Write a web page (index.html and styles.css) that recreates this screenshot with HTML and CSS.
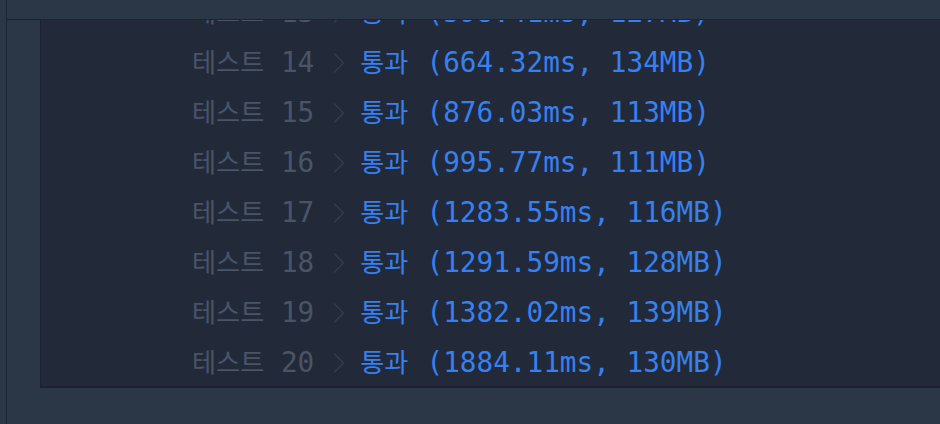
FILE: index.html
```html
<!DOCTYPE html>
<html lang="ko">
<head>
    <meta charset="UTF-8">
    <meta name="viewport" content="width=device-width, initial-scale=1.0">
    <title>채점 결과</title>
    <link rel="stylesheet" href="styles.css">
</head>
<body>
    <div class="app">
        <div class="rail"></div>
        <div class="main">
            <div class="topbar"></div>
            <div class="content">
                <div class="console">
                    <ul class="results">
                        <li class="result"><span class="ko label">테스트</span> <span class="num">13</span> <svg class="chev" viewBox="0 0 16.5 28"><path d="M3 4.5 L12.5 14 L3 23.5"/></svg> <span class="ko pass">통과</span> <span class="stat">(598.41ms, 127MB)</span></li>
                        <li class="result"><span class="ko label">테스트</span> <span class="num">14</span> <svg class="chev" viewBox="0 0 16.5 28"><path d="M3 4.5 L12.5 14 L3 23.5"/></svg> <span class="ko pass">통과</span> <span class="stat">(664.32ms, 134MB)</span></li>
                        <li class="result"><span class="ko label">테스트</span> <span class="num">15</span> <svg class="chev" viewBox="0 0 16.5 28"><path d="M3 4.5 L12.5 14 L3 23.5"/></svg> <span class="ko pass">통과</span> <span class="stat">(876.03ms, 113MB)</span></li>
                        <li class="result"><span class="ko label">테스트</span> <span class="num">16</span> <svg class="chev" viewBox="0 0 16.5 28"><path d="M3 4.5 L12.5 14 L3 23.5"/></svg> <span class="ko pass">통과</span> <span class="stat">(995.77ms, 111MB)</span></li>
                        <li class="result"><span class="ko label">테스트</span> <span class="num">17</span> <svg class="chev" viewBox="0 0 16.5 28"><path d="M3 4.5 L12.5 14 L3 23.5"/></svg> <span class="ko pass">통과</span> <span class="stat">(1283.55ms, 116MB)</span></li>
                        <li class="result"><span class="ko label">테스트</span> <span class="num">18</span> <svg class="chev" viewBox="0 0 16.5 28"><path d="M3 4.5 L12.5 14 L3 23.5"/></svg> <span class="ko pass">통과</span> <span class="stat">(1291.59ms, 128MB)</span></li>
                        <li class="result"><span class="ko label">테스트</span> <span class="num">19</span> <svg class="chev" viewBox="0 0 16.5 28"><path d="M3 4.5 L12.5 14 L3 23.5"/></svg> <span class="ko pass">통과</span> <span class="stat">(1382.02ms, 139MB)</span></li>
                        <li class="result"><span class="ko label">테스트</span> <span class="num">20</span> <svg class="chev" viewBox="0 0 16.5 28"><path d="M3 4.5 L12.5 14 L3 23.5"/></svg> <span class="ko pass">통과</span> <span class="stat">(1884.11ms, 130MB)</span></li>
                    </ul>
                </div>
            </div>
        </div>
    </div>
</body>
</html>
```

FILE: styles.css
```css
* {
    margin: 0;
    padding: 0;
    box-sizing: border-box;
}
body {
    background-color: #2b3647;
    font-family: 'DejaVu Sans Mono', 'Noto Sans CJK KR', monospace;
}
.app {
    display: flex;
    height: 424px;
}
.rail {
    width: 7px;
    border-right: 1px solid #1d2431;
    flex-shrink: 0;
}
.main {
    flex: 1;
    display: flex;
    flex-direction: column;
    min-width: 0;
}
.topbar {
    height: 20px;
    border-bottom: 1px solid #1d2431;
}
.content {
    padding-left: 33px;
}
.console {
    height: 368px;
    background-color: #222a3a;
    border-left: 1px solid #1b2230;
    border-bottom: 2px solid #1b2230;
    overflow: hidden;
}
.results {
    list-style: none;
    margin-top: -34px;
    padding-left: 151px;
}
.result {
    height: 50px;
    line-height: 50px;
    font-size: 27.7px;
    white-space: nowrap;
}
.ko {
    font-family: 'Noto Sans CJK KR', sans-serif;
    font-size: 26.2px;
}
.label,
.num {
    color: #4a5467;
}
.chev {
    display: inline-block;
    width: 16.5px;
    height: 28px;
    vertical-align: -5px;
}
.chev path {
    fill: none;
    stroke: #333e51;
    stroke-width: 1.3;
}
.pass {
    margin-left: -4px;
}
.pass,
.stat {
    color: #3780f0;
}
.stat {
    margin-left: 1.5px;
}
```
